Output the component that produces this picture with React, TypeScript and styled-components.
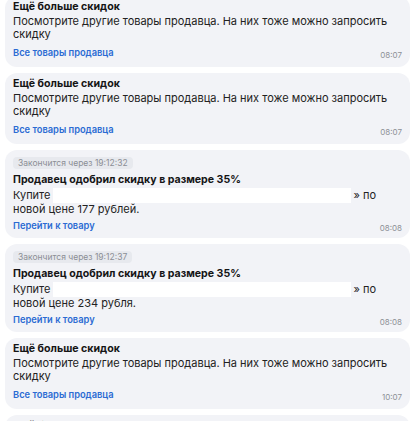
import React from "react";
import styled, { createGlobalStyle } from "styled-components";

const Global = createGlobalStyle`
  html, body { margin: 0; padding: 0; background: #ffffff; }
  body { height: 421px; overflow: hidden; font-family: Inter, "Noto Sans", sans-serif; -webkit-font-smoothing: antialiased; }
`;

const Feed = styled.div`
  display: flex;
  flex-direction: column;
  gap: 6px;
  padding: 0 6px 0 5px;
  margin-top: -4px;
`;

const Card = styled.div<{ $deal?: boolean }>`
  background: #f2f3f7;
  border-radius: 12px;
  padding: ${(p) => (p.$deal ? "7px 8px 5px 8px" : "3px 8px 7px 8px")};
  display: flex;
  flex-direction: column;
`;

const Badge = styled.div`
  align-self: flex-start;
  background: #e7e9ee;
  color: #8b8e95;
  border-radius: 4px;
  font-size: 8.5px;
  line-height: 12px;
  height: 12px;
  padding: 0 5px;
  margin-bottom: 3px;
`;

const Title = styled.div`
  font-size: 10.6px;
  font-weight: 700;
  color: #151515;
  line-height: 16px;
`;

const Body = styled.div`
  font-size: 11px;
  color: #222;
  line-height: 13px;
`;

const Hidden = styled.span`
  display: inline-block;
  width: 298px;
  height: 15px;
  background: #ffffff;
  vertical-align: -4px;
  margin: 0 2px 0 3px;
`;

const Footer = styled.div<{ $gap: number }>`
  display: flex;
  justify-content: space-between;
  align-items: flex-end;
  margin-top: ${(p) => p.$gap}px;
`;

const Link = styled.span`
  font-size: 9.3px;
  font-weight: 600;
  color: #2b6bd3;
  line-height: 14px;
`;

const Time = styled.span`
  font-size: 8px;
  color: #8d9096;
  line-height: 10px;
`;

function MoreCard({ time }: { time: string }) {
  return (
    <Card>
      <Title>Ещё больше скидок</Title>
      <Body>Посмотрите другие товары продавца. На них тоже можно запросить скидку</Body>
      <Footer $gap={5}>
        <Link>Все товары продавца</Link>
        <Time>{time}</Time>
      </Footer>
    </Card>
  );
}

function DealCard({ timer, price, time }: { timer: string; price: string; time: string }) {
  return (
    <Card $deal>
      <Badge>Закончится через {timer}</Badge>
      <Title>Продавец одобрил скидку в размере 35%</Title>
      <Body>
        Купите<Hidden />» по новой цене {price}
      </Body>
      <Footer $gap={3}>
        <Link>Перейти к товару</Link>
        <Time>{time}</Time>
      </Footer>
    </Card>
  );
}

export default function App() {
  return (
    <>
      <Global />
      <Feed>
        <MoreCard time="08:07" />
        <MoreCard time="08:07" />
        <DealCard timer="19:12:32" price="177 рублей." time="08:08" />
        <DealCard timer="19:12:37" price="234 рубля." time="08:08" />
        <MoreCard time="10:07" />
        <MoreCard time="10:07" />
      </Feed>
    </>
  );
}
